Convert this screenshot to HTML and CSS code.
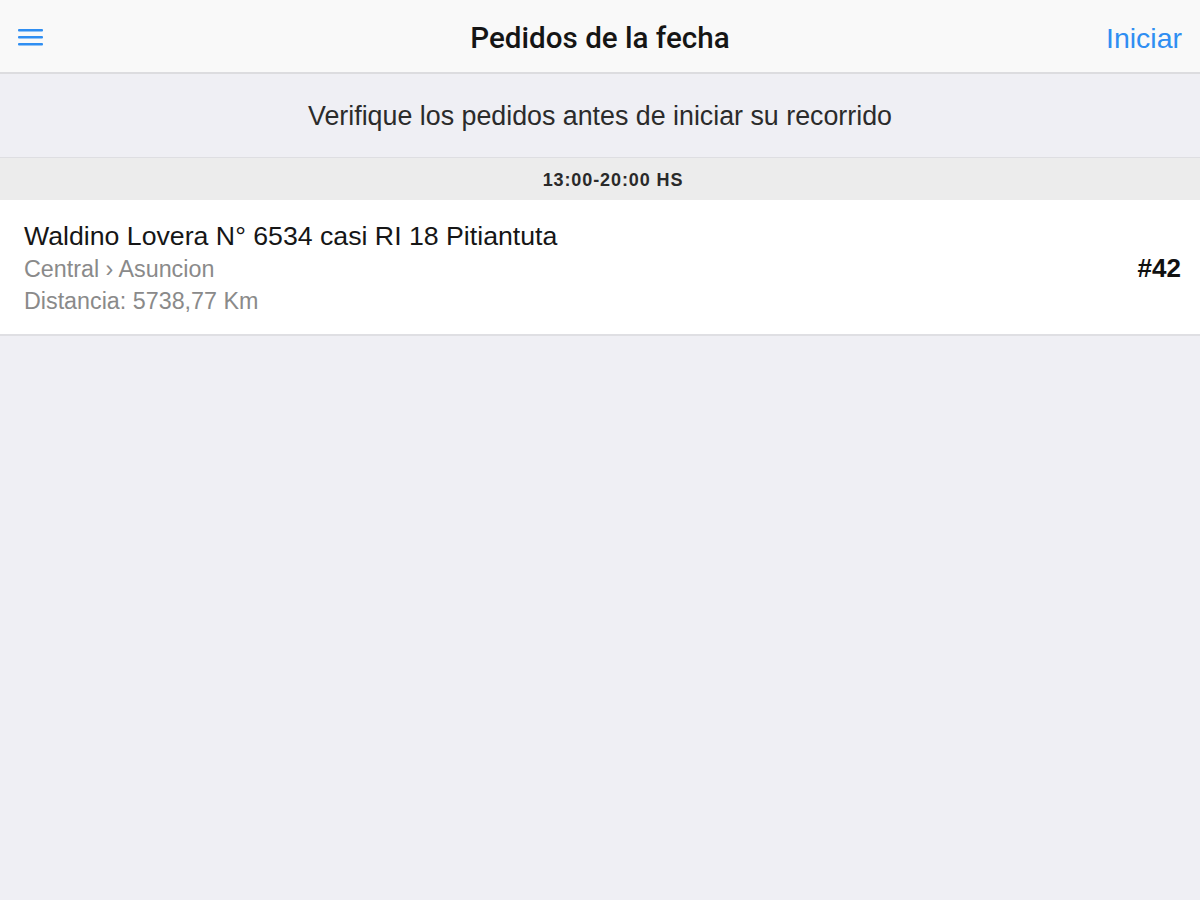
FILE: index.html
```html
<!DOCTYPE html>
<html lang="es">
<head>
  <meta charset="UTF-8">
  <meta name="viewport" content="width=device-width, initial-scale=1.0">
  <title>Pedidos de la fecha</title>
  <link rel="stylesheet" href="styles.css">
</head>
<body>
  <header class="navbar">
    <button class="menu-btn" aria-label="Menu">
      <svg width="26" height="20" viewBox="0 0 26 20">
        <rect x="0" y="1" width="25" height="2.6" rx="1" fill="#2f8ef2"/>
        <rect x="0" y="8" width="25" height="2.6" rx="1" fill="#2f8ef2"/>
        <rect x="0" y="15" width="25" height="2.6" rx="1" fill="#2f8ef2"/>
      </svg>
    </button>
    <h1 class="title">Pedidos de la fecha</h1>
    <a class="nav-action" href="#">Iniciar</a>
  </header>

  <div class="notice">Verifique los pedidos antes de iniciar su recorrido</div>

  <div class="section-head">13:00-20:00 HS</div>

  <ul class="orders">
    <li class="order">
      <div class="order-info">
        <div class="order-address">Waldino Lovera N° 6534 casi RI 18 Pitiantuta</div>
        <div class="order-sub">Central › Asuncion</div>
        <div class="order-sub">Distancia: 5738,77 Km</div>
      </div>
      <div class="order-num">#42</div>
    </li>
  </ul>
</body>
</html>
```

FILE: styles.css
```css
body {
  margin: 0;
  padding: 0;
  font-family: 'Liberation Sans', Arial, sans-serif;
  background-color: #efeff4;
  color: #1a1a1a;
  min-height: 900px;
}
.navbar {
  height: 72px;
  background-color: #f9f9f9;
  border-bottom: 2px solid #dcdcdf;
  display: flex;
  align-items: center;
  justify-content: space-between;
  padding: 0 18px 0 18px;
  position: relative;
}
.menu-btn {
  background: none;
  border: 0;
  padding: 0;
  display: flex;
  margin-top: 4px;
}
.title {
  position: absolute;
  left: 0;
  right: 0;
  top: 0;
  line-height: 77px;
  text-align: center;
  margin: 0;
  font-family: Roboto, 'Liberation Sans', sans-serif;
  font-size: 29.6px;
  font-weight: 500;
  color: #151515;
  pointer-events: none;
}
.nav-action {
  color: #2f8ef2;
  text-decoration: none;
  font-size: 28.5px;
  margin-top: 4px;
}
.notice {
  height: 84px;
  display: flex;
  align-items: center;
  justify-content: center;
  font-size: 26.8px;
  color: #2b2b2b;
  border-bottom: 1px solid #dedee2;
  padding-top: 2px;
  box-sizing: border-box;
}
.section-head {
  height: 42px;
  background-color: #ececec;
  display: flex;
  align-items: center;
  justify-content: center;
  font-size: 18px;
  letter-spacing: 0.9px;
  font-weight: bold;
  color: #2a2a2a;
  padding: 2px 0 0 26px;
  box-sizing: border-box;
}
.orders {
  list-style: none;
  margin: 0;
  padding: 0;
}
.order {
  background-color: #fff;
  height: 136px;
  border-bottom: 2px solid #dfdfe3;
  display: flex;
  align-items: center;
  justify-content: space-between;
  padding: 2px 19px 0 24px;
  box-sizing: border-box;
}
.order-address {
  font-size: 26.7px;
  color: #161616;
  line-height: 34px;
}
.order-sub {
  font-size: 23.3px;
  color: #8a8a8a;
  line-height: 32px;
}
.order-num {
  font-size: 26px;
  font-weight: bold;
  color: #111;
}
```
